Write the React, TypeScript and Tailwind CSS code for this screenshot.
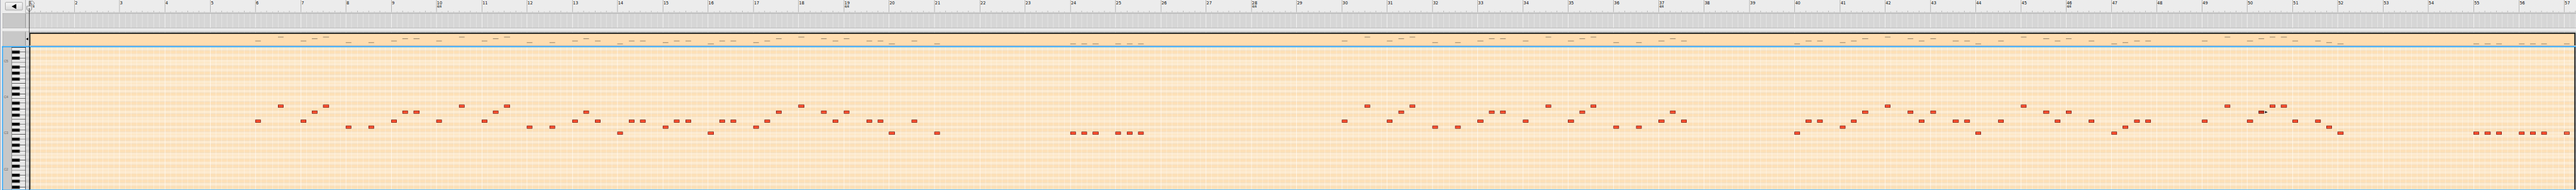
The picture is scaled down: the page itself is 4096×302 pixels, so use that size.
import React from "react";

const ORIGIN = 67.43;
const BAR = 105.529;
const GRID_X = 60;
const GRID_W = 5945;
const REGION_END = 6001;

const at = (bar: number, eighth = 0) => Math.round(ORIGIN + (bar - 1) * BAR + (eighth * BAR) / 8) - GRID_X;

// Pitches used by the part, mapped to [piano roll y, overview y].
const PITCH: Record<string, [number, number]> = {
  A: [244, 86],
  G: [258, 90],
  E: [279, 95],
  D: [293, 99],
  C: [307, 102],
};

// Each entry: bar number, then pitch + eighth position pairs.
const PART: [number, string][] = [
  [6, "E0 A4"], [7, "E0 G2 A4"], [8, "D0 D4"], [9, "E0 G2 G4"], [10, "E0 A4"],
  [11, "E0 G2 A4"], [12, "D0 D4"], [13, "E0 G2 E4"], [14, "C0 E2 E4"], [15, "D0 E2 E4"],
  [16, "C0 E2 E4"], [17, "D0 E2 G4"], [18, "A0 G4 E6"], [19, "G0 E4 E6"], [20, "C0 E4"],
  [21, "C0"], [24, "C0 C2 C4"], [25, "C0 C2 C4"],
  [30, "E0 A4"], [31, "E0 G2 A4"], [32, "D0 D4"], [33, "E0 G2 G4"], [34, "E0 A4"],
  [35, "E0 G2 A4"], [36, "D0 D4"], [37, "E0 G2 E4"], [40, "C0 E2 E4"], [41, "D0 E2 G4"],
  [42, "A0 G4 E6"], [43, "G0 E4 E6"], [44, "C0 E4"], [45, "A0 G4 E6"], [46, "G0 E4"],
  [47, "C0 D2 E4 E6"], [49, "E0 A4"], [50, "E0 G2 A4 A6"], [51, "E0 E4 D6"], [52, "C0"],
  [55, "C0 C2 C4"], [56, "C0 C2 C4"], [57, "C0"],
];

const SIGNATURE_BARS = [10, 19, 28, 37, 46];

const NOTES = PART.flatMap(([bar, seq]) =>
  seq.split(" ").map((s) => {
    const e = Number(s[1]);
    const x = at(bar, e);
    return { bar, e, x, w: at(bar, e + 1) - x, roll: PITCH[s[0]][0], mini: PITCH[s[0]][1] };
  }),
);

const BARS = Array.from({ length: 57 }, (_, i) => i + 1);
const EIGHTHS = BARS.flatMap((b) => [0, 1, 2, 3, 4, 5, 6, 7].map((e) => ({ b, e, x: at(b, e) }))).filter(
  (l) => l.x < GRID_W && l.x > 10,
);
const OCTAVES = [0, 1, 2, 3];
const BLACK_TOPS = OCTAVES.flatMap((o) => [118, 132, 153, 167, 181].map((y) => y + 84 * o)).filter((y) => y < 442);
const OCTAVE_LINES = OCTAVES.flatMap((o) => [145 + 84 * o, 194 + 84 * o]).filter((y) => y < 442);

function GridLines({ y, h, soft, strong }: { y: number; h: number; soft: string; strong: string }) {
  return (
    <>
      {EIGHTHS.map((l) => (
        <rect key={l.x} x={l.x} y={y} width={1} height={h} fill="#fff" className={l.e === 0 ? strong : soft} />
      ))}
    </>
  );
}

function Ruler() {
  return (
    <div className="relative h-[29px] grow overflow-hidden">
      <svg className="block" width={GRID_W} height={29}>
        {EIGHTHS.map((l) => {
          const top = l.e === 0 ? 0 : l.e % 2 === 0 ? 25 : 27;
          return <rect key={l.x} x={l.x} y={top} width={1} height={29 - top} fill="#9c9c9c" />;
        })}
      </svg>
      {BARS.slice(1).map((b) => (
        <div
          key={b}
          className="absolute top-[1px] font-['DejaVu_Sans',sans-serif] text-black"
          style={{ left: at(b) + 1.7 }}
        >
          <div className="text-[9.5px] leading-[11px]">{b}</div>
          {SIGNATURE_BARS.includes(b) && (
            <div className="mt-[0.4px] text-[7.5px] leading-[8px] tracking-[-0.6px]">4/4</div>
          )}
        </div>
      ))}
    </div>
  );
}

function Keyboard() {
  return (
    <svg className="block shrink-0" width={33} height={332} viewBox="27 110 33 332">
      <rect x={27} y={110} width={33} height={332} fill="#e7e7e7" />
      <rect x={28} y={111} width={1} height={331} fill="#fff" />
      <rect x={28} y={111} width={31} height={1} fill="#fff" />
      {OCTAVE_LINES.map((y) => (
        <g key={y}>
          <rect x={28} y={y} width={31} height={1} fill="#000" />
          <rect x={28} y={y + 1} width={31} height={1} fill="#fff" />
        </g>
      ))}
      {BLACK_TOPS.map((y) => (
        <g key={y}>
          <rect x={28} y={y} width={19} height={8} fill="#cfcfcf" />
          <rect x={45} y={y + 3} width={14} height={1} fill="#000" />
          <rect x={46} y={y + 4} width={13} height={1} fill="#fff" />
          <rect x={28} y={y} width={18} height={7} fill="#1c1c1c" />
          <rect x={29} y={y + 2} width={14} height={3} fill="#000" />
        </g>
      ))}
      <rect x={27} y={110} width={1} height={332} fill="#000" />
      <rect x={27} y={110} width={33} height={1} fill="#000" />
      <rect x={59} y={110} width={1} height={332} fill="#000" />
    </svg>
  );
}

function PianoRoll() {
  const left = 69 - GRID_X;
  const hover = NOTES.find((n) => n.bar === 50 && n.e === 2)!;
  return (
    <svg className="block shrink-0" width={GRID_W} height={332} viewBox={`0 110 ${GRID_W} 332`}>
      <rect x={0} y={110} width={GRID_W} height={332} fill="#dfdfdf" />
      <rect x={left} y={110} width={REGION_END - 69} height={332} fill="#fdebd0" />
      {BLACK_TOPS.map((y) => (
        <g key={y}>
          <rect x={0} y={y} width={GRID_W} height={7} fill="#cecece" />
          <rect x={left} y={y} width={REGION_END - 69} height={7} fill="#fde0b7" />
        </g>
      ))}
      {OCTAVE_LINES.map((y) => (
        <g key={y}>
          <rect x={0} y={y} width={left} height={1} fill="#cecece" />
          <rect x={left} y={y} width={REGION_END - 69} height={1} fill="#fde0b7" />
        </g>
      ))}
      <GridLines y={110} h={332} soft="opacity-50" strong="opacity-95" />
      <rect x={left} y={110} width={2} height={332} fill="#212323" />
      <rect x={REGION_END - GRID_X} y={110} width={3} height={332} fill="#1f2020" />
      {NOTES.map((n) => (
        <g key={n.x}>
          <rect x={n.x} y={n.roll} width={n.w} height={7} fill={n === hover ? "#4a0d0a" : "#60100a"} />
          <rect
            x={n.x + 1}
            y={n.roll + 1}
            width={n.w - 2}
            height={5}
            fill={n === hover ? "#c93420" : n.bar === 57 ? "#ff6644" : "#ff5030"}
          />
        </g>
      ))}
      <path d={`M${hover.x + 14} 257.5v8l8 -4z`} fill="#fff" stroke="#d8cbb8" strokeWidth={0.6} />
      <path d={`M${hover.x + 15} 258.8v5.4l6 -2.7z`} fill="#000" />
    </svg>
  );
}

function Overview() {
  return (
    <svg className="block shrink-0" width={GRID_W} height={32} viewBox={`0 74 ${GRID_W} 32`}>
      <rect x={0} y={74} width={GRID_W} height={32} fill="#d6d6d6" />
      <GridLines y={74} h={32} soft="opacity-50" strong="opacity-100" />
      <rect x={9} y={76} width={REGION_END + 3 - 69} height={30} fill="#202321" />
      <rect x={11} y={79} width={REGION_END - 71} height={27} fill="#ffddb0" />
      {NOTES.map((n) => (
        <rect key={n.x} x={n.x} y={n.mini} width={n.w} height={1} fill="#665849" />
      ))}
      <path d="M0 91l4 -4h3.5v8h-3.5z" fill="#fff" stroke="#aaa" strokeWidth={0.5} />
      <path d="M0.3 91l5.7 -3.2v6.4z" fill="#000" />
    </svg>
  );
}

function Playhead() {
  return (
    <svg className="absolute top-0 left-[60px]" width={26} height={443}>
      <defs>
        <linearGradient id="knob" x1="0" y1="0" x2="0" y2="1">
          <stop offset="0" stopColor="#f4f4f4" />
          <stop offset="1" stopColor="#bdbdbd" />
        </linearGradient>
      </defs>
      <path d="M8.5 2.5h8l4 5l-4 5h-8z" fill="#e6e6e6" stroke="#777" />
      <rect x={8} y={2} width={1} height={12} fill="#222" />
      <path d="M2.5 14.5h11.5v7.5l-5.5 6l-6 -6z" fill="url(#knob)" stroke="#6c6c6c" />
      <rect x={8} y={19} width={1} height={424} fill="#000" />
    </svg>
  );
}

export default function App() {
  return (
    <div className="h-[302px] w-[4096px] overflow-hidden bg-[#ececec]">
      <div className="relative flex h-[443px] w-[6005px] origin-top-left scale-x-[0.6821] scale-y-[0.6817] flex-col overflow-hidden bg-[#ececec] font-['Liberation_Sans',Arial,sans-serif] text-black">
        <div className="flex h-[31px] shrink-0">
          <div className="w-[59px] shrink-0 pt-[5px] pl-[12px]">
            <div className="flex h-[19px] w-[41px] items-center justify-center rounded-[2px] border border-[#8c8c8c] bg-linear-to-b from-[#f8f8f8] to-[#d9d9d9]">
              <svg className="block" width={11} height={12}>
                <path d="M0 6L11 0V12Z" fill="#000" />
              </svg>
            </div>
          </div>
          <div className="flex h-[30px] grow border-b border-l border-[#9d9d9d]">
            <Ruler />
          </div>
        </div>

        <div className="ml-[6px] flex h-[35px] shrink-0 border-y border-l border-[#9d9d9d]">
          <div className="w-[53px] shrink-0 border-r border-[#7c7c7c] bg-[#c8c8c8]" />
          <svg className="block shrink-0 bg-[#d6d6d6]" width={GRID_W} height={33}>
            <GridLines y={0} h={33} soft="opacity-50" strong="opacity-100" />
          </svg>
        </div>

        <div className="mt-[7px] ml-[6px] flex h-[34px] shrink-0 border-y border-l border-[#9d9d9d]">
          <div className="w-[53px] shrink-0 border-r border-[#7c7c7c] bg-[#c8c8c8]" />
          <Overview />
        </div>

        <div className="mt-[1px] ml-[5px] flex h-[335px] shrink-0 border-t-2 border-b border-l-2 border-[#0099ff]">
          <div className="flex w-[20px] shrink-0 flex-col gap-[76px] bg-[#c7c7c7] pt-[29px] pl-[2px] text-[8px] leading-[8px] text-[#666]">
            <span>C5</span>
            <span>C4</span>
            <span>C3</span>
            <span>C2</span>
          </div>
          <Keyboard />
          <PianoRoll />
        </div>

        <Playhead />
        <span className="absolute top-[2px] left-[70px] text-[10px] leading-[11px]">L</span>
        <span className="absolute top-[12px] left-[76px] font-['DejaVu_Sans',sans-serif] text-[7.5px] leading-[8px]">4</span>
        <div className="absolute top-0 left-0 h-[443px] w-[1px] bg-[#858a9c]" />
      </div>
    </div>
  );
}
